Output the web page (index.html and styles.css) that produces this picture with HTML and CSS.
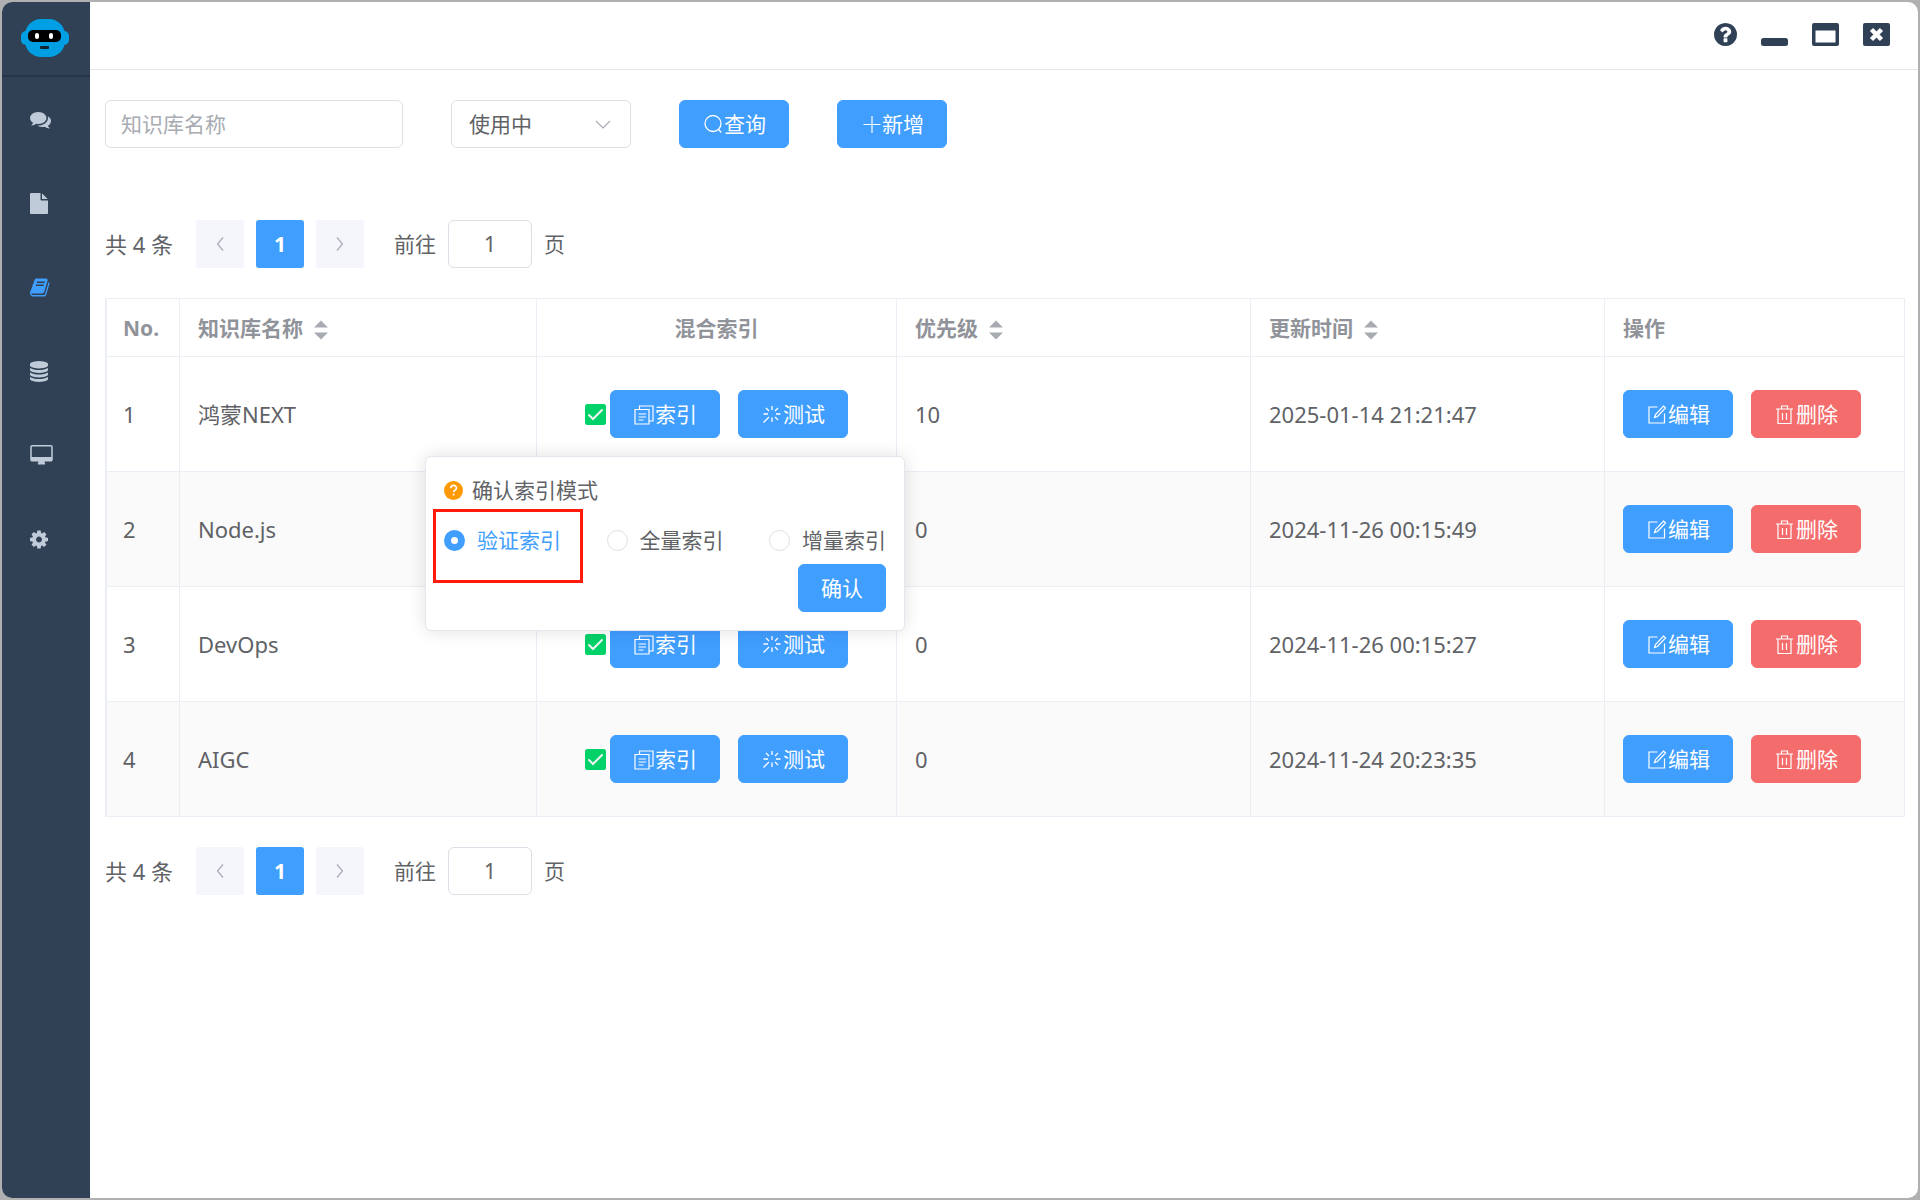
FILE: index.html
```html
<!DOCTYPE html>
<html lang="zh-CN">
<head>
<meta charset="utf-8">
<title>知识库</title>
<link rel="stylesheet" href="styles.css">
</head>
<body>
<svg class="sprite" aria-hidden="true">
  <symbol id="i-comments" viewBox="0 0 1792 1792"><path d="M1408 768q0 139-94 257t-256.500 186.500-353.500 68.500q-86 0-176-16-124 88-278 128-36 9-86 16h-3q-11 0-20.500-8t-11.500-21q-1-3-1-6.500t.5-6.500 2-6l2.500-5 3.500-5.500 4-5 4.500-5 4-4.500q5-6 23-25t26-29.500 22.500-29 25-38.500 20.500-44q-124-72-195-177t-71-224q0-139 94-257t256.500-186.500 353.500-68.500 353.500 68.500 256.500 186.500 94 257zm384 256q0 120-71 224.500t-195 176.500q10 24 20.500 44t25 38.500 22.500 29 26 29.500 23 25q1 1 4 4.500t4.500 5 4 5 3.500 5.500l2.500 5 2 6 .5 6.500-1 6.500q-3 14-13 22t-22 7q-50-7-86-16-154-40-278-128-90 16-176 16-271 0-472-132 58 4 88 4 161 0 309-45t264-129q125-92 192-212t67-254q0-77-23-152 129 71 204 178t75 230z"/></symbol>
  <symbol id="i-file" viewBox="128 0 1792 1792"><path d="M1152 512v-472q22 14 36 28l408 408q14 14 28 36h-472zm-128 32q0 40 28 68t68 28h544v1056q0 40-28 68t-68 28h-1344q-40 0-68-28t-28-68v-1600q0-40 28-68t68-28h800v544z"/></symbol>
  <symbol id="i-book" viewBox="64 0 1792 1792"><path d="M1703 478q40 57 18 129l-275 906q-19 64-76.500 107.500t-122.500 43.500h-923q-77 0-148.500-53.500t-99.500-131.500q-24-67-2-127 0-4 3-27t4-37q1-8-3-21.500t-3-19.500q2-11 8-21t16.500-23.500 16.500-23.500q23-38 45-91.500t30-91.500q3-10 .5-30t-.5-28q3-11 17-28t17-23q21-36 42-92t25-90q1-9-2.500-32t.5-28q4-13 22-30.500t22-22.500q19-26 42.500-84.500t27.500-96.500q1-8-3-25.500t-2-26.500q2-8 9-18t18-23 17-21q8-12 16.500-30.500t15-35 16-36 19.500-32 26.500-23.500 36-11.500 47.500 5.500l-1 3q38-9 51-9h761q74 0 114 56t18 130l-274 906q-36 119-71.500 153.500t-128.500 34.500h-869q-27 0-38 15-11 16-1 43 24 70 144 70h923q29 0 56-15.500t35-41.500l300-987q7-22 5-57 38 15 59 43zm-1064 2q-4 13 2 22.500t20 9.500h608q13 0 25.500-9.500t16.500-22.500l21-64q4-13-2-22.500t-20-9.500h-608q-13 0-25.500 9.500t-16.500 22.500zm-83 256q-4 13 2 22.500t20 9.500h608q13 0 25.500-9.500t16.500-22.500l21-64q4-13-2-22.500t-20-9.500h-608q-13 0-25.500 9.500t-16.500 22.500z"/></symbol>
  <symbol id="i-database" viewBox="128 0 1792 1792"><path d="M896 768q237 0 443-43t325-127v170q0 69-103 128t-280 93.500-385 34.500-385-34.500-280-93.500-103-128v-170q119 84 325 127t443 43zm0 768q237 0 443-43t325-127v170q0 69-103 128t-280 93.500-385 34.500-385-34.500-280-93.500-103-128v-170q119 84 325 127t443 43zm0-384q237 0 443-43t325-127v170q0 69-103 128t-280 93.500-385 34.500-385-34.500-280-93.500-103-128v-170q119 84 325 127t443 43zm0-1152q208 0 385 34.500t280 93.500 103 128v128q0 69-103 128t-280 93.500-385 34.500-385-34.500-280-93.500-103-128v-128q0-69 103-128t280-93.500 385-34.500z"/></symbol>
  <symbol id="i-desktop" viewBox="-64 0 1920 1792"><path d="M1728 992v-832q0-13-9.500-22.500t-22.500-9.500h-1600q-13 0-22.500 9.500t-9.500 22.500v832q0 13 9.500 22.500t22.500 9.500h1600q13 0 22.500-9.500t9.500-22.500zm128-832v1088q0 66-47 113t-113 47h-544q0 37 16 77.500t32 71 16 43.500q0 26-19 45t-45 19h-512q-26 0-45-19t-19-45q0-14 16-44t32-70 16-78h-544q-66 0-113-47t-47-113v-1088q0-66 47-113t113-47h1600q66 0 113 47t47 113z"/></symbol>
  <symbol id="i-cog" viewBox="128 0 1792 1792"><path d="M1152 896q0-106-75-181t-181-75-181 75-75 181 75 181 181 75 181-75 75-181zm512-109v222q0 12-8 23t-20 13l-185 28q-19 54-39 91 35 50 107 138 10 12 10 25t-9 23q-27 37-99 108t-94 71q-12 0-26-9l-138-108q-44 23-91 38-16 136-29 186-7 28-36 28h-222q-14 0-24.500-8.500t-11.500-21.500l-28-184q-49-16-90-37l-141 107q-10 9-25 9-14 0-25-11-126-114-165-168-7-10-7-23 0-12 8-23 15-21 51-66.500t54-70.500q-27-50-41-99l-183-27q-13-2-21-12.500t-8-23.500v-222q0-12 8-23t19-13l186-28q14-46 39-92-40-57-107-138-10-12-10-24 0-10 9-23 26-36 98.500-107.500t94.500-71.500q13 0 26 10l138 107q44-23 91-38 16-136 29-186 7-28 36-28h222q14 0 24.500 8.500t11.500 21.500l28 184q49 16 90 37l142-107q9-9 24-9 13 0 25 10 129 119 165 170 7 8 7 22 0 12-8 23-15 21-51 66.500t-54 70.500q26 50 41 98l183 28q13 2 21 12.500t8 23.500z"/></symbol>
  <symbol id="i-help" viewBox="128 128 1536 1536"><path d="M1024 1376v-192q0-14-9-23t-23-9h-192q-14 0-23 9t-9 23v192q0 14 9 23t23 9h192q14 0 23-9t9-23zm256-672q0-88-55.500-163t-138.500-116-170-41q-243 0-371 213-15 24 8 42l132 100q7 6 19 6 16 0 25-12 53-68 86-92 34-24 86-24 48 0 85.500 26t37.500 59q0 38-20 61t-68 45q-63 28-115.500 86.500t-52.500 125.500v36q0 14 9 23t23 9h192q14 0 23-9t9-23q0-19 21.500-49.500t54.500-49.500q32-18 49-28.500t46-35 44.500-48 28-60.500 12.500-81zm384 192q0 209-103 385.500t-279.500 279.500-385.500 103-385.500-103-279.500-279.500-103-385.500 103-385.500 279.500-279.500 385.500-103 385.500 103 279.500 279.500 103 385.500z"/></symbol>
  <symbol id="i-min" viewBox="0 0 27 23"><rect y="15" width="27" height="8" rx="2.500"/></symbol>
  <symbol id="i-max" viewBox="0 0 27 23"><path fill-rule="evenodd" d="M2 0h23q2 0 2 2v19q0 2-2 2H2q-2 0-2-2V2q0-2 2-2zM3.500 7.500v12h20v-12z"/></symbol>
  <symbol id="i-close" viewBox="0 0 27 23"><rect width="27" height="23" rx="2"/><path d="M8.500 6.500l10 10M18.500 6.500l-10 10" stroke="#fff" stroke-width="4.500"/></symbol>
  <symbol id="i-search" viewBox="0 0 21 21"><g fill="none" stroke="currentColor" stroke-width="1.300"><circle cx="10.500" cy="9.500" r="8"/><path d="M15.800 15.300l3 3.200"/></g></symbol>
  <symbol id="i-plus" viewBox="0 0 21 21"><path d="M11.500 2v17M3 10.500h17" stroke="currentColor" stroke-width="1.200"/></symbol>
  <symbol id="i-copy" viewBox="0 0 21 21"><path d="M1.500 5.500h14v14.500h-14zM6 5.500V2h13.500v15h-4M5 10h7.500M5 13h7.500M5 16h5" fill="none" stroke="currentColor" stroke-width="1.200"/></symbol>
  <symbol id="i-loading" viewBox="0 0 21 21"><path d="M10.500 2v4M10.500 13.500v4.500M2 10h4.500M14.500 10h4.500M4.500 4l3 3M16.500 4l-3 3M7.500 13L2 18.500M13.500 13l3 3" fill="none" stroke="currentColor" stroke-width="1.300"/></symbol>
  <symbol id="i-edit" viewBox="0 0 21 21"><path d="M11 3H2.500v16h15.500V9.500M17 2l2 2-8 8.500-3 1 1-3z" fill="none" stroke="currentColor" stroke-width="1.200"/></symbol>
  <symbol id="i-delete" viewBox="0 0 21 21"><path d="M1.500 5h17M3.500 5v14.500h13V5M7 5V2h6v3M8 9v7M12 9v7" fill="none" stroke="currentColor" stroke-width="1.200"/></symbol>
  <symbol id="i-left" viewBox="0 0 8 14"><path d="M7 .5L1.500 7 7 13.500" fill="none" stroke="currentColor" stroke-width="1.200"/></symbol>
  <symbol id="i-right" viewBox="0 0 8 14"><path d="M1 .5L6.500 7 1 13.500" fill="none" stroke="currentColor" stroke-width="1.200"/></symbol>
  <symbol id="i-sort" viewBox="0 0 14 20"><path d="M7 .5l7 7H0zM0 12.500h14l-7 7z"/></symbol>
  <symbol id="i-check" viewBox="0 0 21 21"><rect width="21" height="21" rx="2.500" fill="#00d26a"/><path d="M4 11l4 4 9-9" fill="none" stroke="#f4f4f4" stroke-width="2" stroke-linecap="round"/></symbol>
</svg>

<div class="window">
  <aside class="sidebar">
    <div class="brand">
      <svg class="logo" viewBox="0 0 48 38"><rect y="12" width="48" height="14" rx="5" fill="#009fe3"/><rect x="4" width="40" height="38" rx="16" fill="#009fe3"/><rect x="7" y="11" width="33" height="12" rx="5" fill="#000"/><rect x="14" y="14" width="4" height="6" rx="2" fill="#fff"/><rect x="28" y="14" width="4" height="6" rx="2" fill="#fff"/><rect x="19" y="27" width="9" height="3" rx="1" fill="#16222e"/></svg>
    </div>
    <nav class="menu">
      <a class="menu-item" href="#chat" aria-label="对话"><svg class="menu-icon"><use href="#i-comments"/></svg></a>
      <a class="menu-item" href="#file" aria-label="文件"><svg class="menu-icon"><use href="#i-file"/></svg></a>
      <a class="menu-item active" href="#book" aria-label="知识库"><svg class="menu-icon"><use href="#i-book"/></svg></a>
      <a class="menu-item" href="#data" aria-label="数据"><svg class="menu-icon"><use href="#i-database"/></svg></a>
      <a class="menu-item" href="#desktop" aria-label="桌面"><svg class="menu-icon wide"><use href="#i-desktop"/></svg></a>
      <a class="menu-item" href="#settings" aria-label="设置"><svg class="menu-icon"><use href="#i-cog"/></svg></a>
    </nav>
  </aside>

  <div class="page">
    <header class="titlebar">
      <button class="win-btn" aria-label="帮助"><svg class="help-icon"><use href="#i-help"/></svg></button>
      <button class="win-btn" aria-label="最小化"><svg class="win-icon"><use href="#i-min"/></svg></button>
      <button class="win-btn" aria-label="最大化"><svg class="win-icon"><use href="#i-max"/></svg></button>
      <button class="win-btn" aria-label="关闭"><svg class="win-icon"><use href="#i-close"/></svg></button>
    </header>

    <main class="content">
      <form class="filters">
        <input class="field name" type="text" placeholder="知识库名称" aria-label="知识库名称">
        <div class="select">
          <select class="field" aria-label="状态"><option>使用中</option></select>
          <svg class="arrow" viewBox="0 0 16 9"><path d="M1 1l7 7 7-7" fill="none" stroke="#a8abb2" stroke-width="1.200"/></svg>
        </div>
        <button type="button" class="btn"><svg class="icon"><use href="#i-search"/></svg>查询</button>
        <button type="button" class="btn"><svg class="icon"><use href="#i-plus"/></svg>新增</button>
      </form>

      <div class="pager top">
        <span class="total">共 4 条</span>
        <button class="page-btn" disabled aria-label="上一页"><svg class="page-arrow"><use href="#i-left"/></svg></button>
        <button class="page-btn current">1</button>
        <button class="page-btn" disabled aria-label="下一页"><svg class="page-arrow"><use href="#i-right"/></svg></button>
        <label class="jump">前往<input class="field page-no" type="text" value="1">页</label>
      </div>

      <table class="grid">
        <colgroup><col class="c-no"><col class="c-name"><col class="c-index"><col><col><col class="c-ops"></colgroup>
        <thead>
          <tr>
            <th>No.</th>
            <th>知识库名称<svg class="sort"><use href="#i-sort"/></svg></th>
            <th class="center">混合索引</th>
            <th>优先级<svg class="sort"><use href="#i-sort"/></svg></th>
            <th>更新时间<svg class="sort"><use href="#i-sort"/></svg></th>
            <th>操作</th>
          </tr>
        </thead>
        <tbody>
          <tr>
            <td>1</td><td>鸿蒙NEXT</td>
            <td><div class="index-cell"><svg class="check"><use href="#i-check"/></svg>
              <div class="anchor">
                <button class="btn"><svg class="icon"><use href="#i-copy"/></svg>索引</button>
                <div class="popover" role="dialog" aria-label="确认索引模式">
                  <p class="pop-title"><svg class="pop-icon" viewBox="0 0 19 19"><circle cx="9.500" cy="9.500" r="9.500" fill="#f90"/><path d="M6.800 7.300c0-3.900 5.700-3.700 5.700-.3 0 2.100-2.900 2-2.900 4.300M9.600 12.800v1.700" fill="none" stroke="#fff" stroke-width="1.700"/></svg>确认索引模式</p>
                  <div class="radios">
                    <label class="radio checked"><input type="radio" name="mode" checked>验证索引</label>
                    <label class="radio"><input type="radio" name="mode">全量索引</label>
                    <label class="radio"><input type="radio" name="mode">增量索引</label>
                  </div>
                  <button class="btn confirm">确认</button>
                  <div class="highlight"></div>
                </div>
              </div>
              <button class="btn next"><svg class="icon"><use href="#i-loading"/></svg>测试</button></div></td>
            <td>10</td><td>2025-01-14 21:21:47</td>
            <td><div class="ops"><button class="btn"><svg class="icon"><use href="#i-edit"/></svg>编辑</button><button class="btn danger"><svg class="icon"><use href="#i-delete"/></svg>删除</button></div></td>
          </tr>
          <tr>
            <td>2</td><td>Node.js</td>
            <td><div class="index-cell covered"><svg class="check"><use href="#i-check"/></svg><button class="btn"><svg class="icon"><use href="#i-copy"/></svg>索引</button><button class="btn next"><svg class="icon"><use href="#i-loading"/></svg>测试</button></div></td>
            <td>0</td><td>2024-11-26 00:15:49</td>
            <td><div class="ops"><button class="btn"><svg class="icon"><use href="#i-edit"/></svg>编辑</button><button class="btn danger"><svg class="icon"><use href="#i-delete"/></svg>删除</button></div></td>
          </tr>
          <tr>
            <td>3</td><td>DevOps</td>
            <td><div class="index-cell"><svg class="check"><use href="#i-check"/></svg><button class="btn"><svg class="icon"><use href="#i-copy"/></svg>索引</button><button class="btn next"><svg class="icon"><use href="#i-loading"/></svg>测试</button></div></td>
            <td>0</td><td>2024-11-26 00:15:27</td>
            <td><div class="ops"><button class="btn"><svg class="icon"><use href="#i-edit"/></svg>编辑</button><button class="btn danger"><svg class="icon"><use href="#i-delete"/></svg>删除</button></div></td>
          </tr>
          <tr>
            <td>4</td><td>AIGC</td>
            <td><div class="index-cell"><svg class="check"><use href="#i-check"/></svg><button class="btn"><svg class="icon"><use href="#i-copy"/></svg>索引</button><button class="btn next"><svg class="icon"><use href="#i-loading"/></svg>测试</button></div></td>
            <td>0</td><td>2024-11-24 20:23:35</td>
            <td><div class="ops"><button class="btn"><svg class="icon"><use href="#i-edit"/></svg>编辑</button><button class="btn danger"><svg class="icon"><use href="#i-delete"/></svg>删除</button></div></td>
          </tr>
        </tbody>
      </table>

      <div class="pager">
        <span class="total">共 4 条</span>
        <button class="page-btn" disabled aria-label="上一页"><svg class="page-arrow"><use href="#i-left"/></svg></button>
        <button class="page-btn current">1</button>
        <button class="page-btn" disabled aria-label="下一页"><svg class="page-arrow"><use href="#i-right"/></svg></button>
        <label class="jump">前往<input class="field page-no" type="text" value="1">页</label>
      </div>
    </main>
  </div>
</div>
</body>
</html>
```

FILE: styles.css
```css
*, *::before, *::after { box-sizing: border-box; }

body {
  margin: 0;
  padding: 2px;
  min-height: 100vh;
  display: flex;
  background: #b0b0b0;
  color: #606266;
  font: 21px/30px "Noto Sans", "Noto Sans CJK SC", sans-serif;
}

button, input, select { font: inherit; margin: 0; }
svg { display: block; flex: none; fill: currentColor; }
.sprite { position: absolute; width: 0; height: 0; }

.window {
  flex: 1;
  display: flex;
  min-width: 0;
  background: #fff;
  border-radius: 10px;
}

/* Sidebar */
.sidebar {
  flex: none;
  width: 88px;
  background: #304156;
  border-radius: 10px 0 0 10px;
}
.brand {
  height: 75px;
  padding: 17px 0 0 19px;
  border-bottom: 2px solid #263445;
}
.logo { width: 48px; height: 38px; }
.menu-item {
  display: flex;
  align-items: center;
  height: 84px;
  padding-left: 28px;
  color: #bfcbd9;
}
.menu-item.active { color: #409eff; }
.menu-icon { width: 21px; height: 21px; }
.menu-icon.wide { width: 23px; }

/* Title bar */
.page { flex: 1; min-width: 0; }
.titlebar {
  display: flex;
  justify-content: flex-end;
  align-items: flex-start;
  gap: 24px;
  height: 68px;
  padding: 21px 28px 0;
  border-bottom: 1px solid #e6e6e6;
}
.win-btn { padding: 0; border: 0; background: none; color: #304156; }
.help-icon { width: 23px; height: 23px; }
.win-icon { width: 27px; height: 23px; }

/* Filters */
.content { padding: 30px 13px 30px 15px; }
.filters { display: flex; gap: 48px; }
.field {
  height: 48px;
  padding: 0 15px;
  border: 1px solid #dcdfe6;
  border-radius: 6px;
  background: #fff;
  color: #606266;
  outline: 0;
}
.field::placeholder { color: #a8abb2; opacity: 1; }
.name { width: 298px; }
.select { display: grid; width: 180px; align-items: center; }
.select > * { grid-area: 1 / 1; }
.select .field { appearance: none; width: 100%; padding: 0 17px; }
.arrow {
  justify-self: end;
  width: 16px;
  height: 9px;
  margin-right: 20px;
  pointer-events: none;
}

.btn {
  display: inline-flex;
  align-items: center;
  justify-content: center;
  height: 48px;
  padding: 0 22px;
  border: 1px solid #409eff;
  border-radius: 6px;
  background: #409eff;
  color: #fff;
  font-size: 21px;
  white-space: nowrap;
}
.btn.danger { border-color: #f56c6c; background: #f56c6c; }
.icon { width: 22px; height: 21px; }
.check { width: 21px; height: 21px; }

/* Pagination */
.pager { display: flex; align-items: center; gap: 12px; }
.pager.top { margin: 72px 0 30px; }
.total { width: 79px; font-size: 22px; white-space: nowrap; }
.page-btn {
  display: flex;
  align-items: center;
  justify-content: center;
  width: 48px;
  height: 48px;
  padding: 0;
  border: 0;
  border-radius: 3px;
  background: #f4f6fb;
  color: #a8abb2;
}
.page-btn.current { background: #409eff; color: #fff; font-weight: 700; }
.page-arrow { width: 8px; height: 14px; }
.jump { display: flex; align-items: center; gap: 12px; margin-left: 18px; }
.page-no { width: 84px; text-align: center; }

/* Table */
.grid {
  width: 100%;
  margin-bottom: 30px;
  table-layout: fixed;
  border-collapse: separate;
  border-spacing: 0;
  border-top: 1px solid #ebeef5;
  border-left: 2px solid #ebeef5;
}
.c-no { width: 73px; }
.c-name { width: 357px; }
.c-index { width: 360px; }
.c-ops { width: 300px; }
.grid th, .grid td {
  padding: 0 18px;
  border-right: 1px solid #ebeef5;
  border-bottom: 1px solid #ebeef5;
  text-align: left;
}
.grid th:first-child, .grid td:first-child { padding: 0 16px; }
.grid th { height: 58px; color: #909399; font-weight: 700; white-space: nowrap; }
.grid th.center { text-align: center; }
.grid td { height: 115px; font-size: 22px; }
.grid tbody tr:nth-child(even) { background: #fafafa; }
.sort {
  display: inline-block;
  width: 14px;
  height: 20px;
  margin-left: 11px;
  vertical-align: middle;
  color: #a8abb2;
}
.index-cell { display: flex; align-items: center; justify-content: center; gap: 4px; }
.index-cell.covered { visibility: hidden; }
.index-cell .next { margin-left: 14px; }
.ops { display: flex; gap: 18px; }

/* Index mode popover */
.anchor { position: relative; display: flex; }
.popover {
  position: absolute;
  z-index: 2;
  top: 66px;
  left: 50%;
  width: 480px;
  margin-left: -240px;
  padding: 18px;
  border: 1px solid #e4e7ed;
  border-radius: 6px;
  background: #fff;
  box-shadow: 0 0 18px rgba(0, 0, 0, .12);
  display: flex;
  flex-direction: column;
  font-size: 21px;
}
.pop-title { display: flex; align-items: center; gap: 9px; margin: 0 0 11px; }
.pop-icon { width: 19px; height: 19px; }
.radios { display: flex; justify-content: space-between; height: 48px; }
.radio { display: flex; align-items: center; gap: 12px; white-space: nowrap; }
.radio.checked { color: #409eff; }
.radio input {
  appearance: none;
  width: 21px;
  height: 21px;
  border: 1px solid #dcdfe6;
  border-radius: 50%;
  background: #fff;
}
.radio input:checked { border: 7px solid #409eff; }
.confirm { align-self: flex-end; }
.highlight {
  position: absolute;
  top: 52px;
  left: 7px;
  width: 150px;
  height: 74px;
  border: 3px solid #ff1a0a;
  pointer-events: none;
}
```
